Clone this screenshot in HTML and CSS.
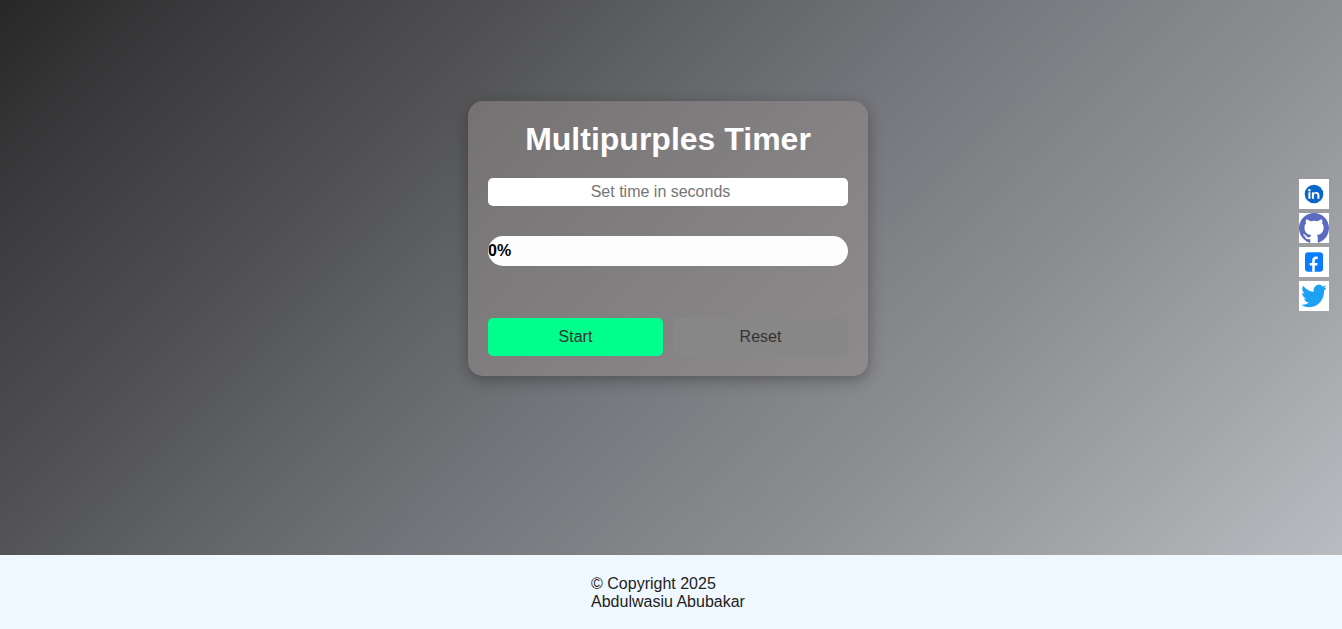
FILE: index.html
```html
<!DOCTYPE html>
<html lang="en">
<head>
<meta charset="utf-8">
<meta name="viewport" content="width=device-width, initial-scale=1">
<title>Multipurples Timer</title>
<link rel="stylesheet" href="styles.css">
</head>
<body>
<main class="page">
  <form class="card">
    <h1 class="title">Multipurples Timer</h1>
    <input class="time-input" type="number" min="0" placeholder="Set time in seconds" aria-label="Set time in seconds">
    <div class="progress"><span class="progress-text">0%</span></div>
    <div class="actions">
      <button class="btn btn-start" type="button">Start</button>
      <button class="btn btn-reset" type="button">Reset</button>
    </div>
  </form>
  <nav class="social" aria-label="Social links">
    <a class="social-link" href="#" aria-label="LinkedIn">
      <svg viewBox="0 0 30 30"><circle cx="15" cy="15" r="9.300" fill="#0a66c8"/><g fill="#fff"><circle cx="10.400" cy="11.200" r="1.200"/><path d="M9.400 13.200h2v6.500h-2zM12.900 13.200h1.900v.9c.5-.7 1.300-1.200 2.500-1.200 2.200 0 3.100 1.300 3.100 3.300v3.500h-2v-3.200c0-1.200-.4-1.900-1.600-1.900s-1.900.8-1.900 2v3.100h-2z"/></g></svg>
    </a>
    <a class="social-link" href="#" aria-label="GitHub">
      <svg viewBox="0 0 16 16"><path fill="#5c6bc0" d="M8 0C3.580 0 0 3.580 0 8c0 3.540 2.290 6.530 5.470 7.900.4.070.55-.17.55-.38 0-.19-.01-.92-.01-1.590-2.010.37-2.530-.49-2.690-.94-.09-.23-.48-.94-.82-1.130-.28-.15-.68-.52-.01-.53.63-.01 1.080.58 1.230.82.72 1.210 1.870.87 2.330.66.070-.52.28-.87.51-1.070-1.780-.2-3.640-.89-3.640-3.950 0-.87.31-1.590.82-2.150-.08-.2-.36-1.020.08-2.120 0 0 .67-.21 2.200.82.64-.18 1.320-.27 2-.27s1.360.09 2 .27c1.530-1.040 2.200-.82 2.200-.82.44 1.100.16 1.920.08 2.120.51.56.82 1.270.82 2.150 0 3.070-1.870 3.750-3.650 3.950.29.25.54.73.54 1.480 0 1.070-.01 1.930-.01 2.300 0 .21.15.36.55.28A8.010 8.010 0 0 0 16 8c0-4.420-3.580-8-8-8z"/></svg>
    </a>
    <a class="social-link" href="#" aria-label="Facebook">
      <svg viewBox="0 0 30 30"><rect x="6" y="5.300" width="18" height="19.400" rx="3.300" fill="#0a7cff"/><path fill="#fff" d="M13.200 24.700v-6.200h-2.500v-2.600h2.500v-2.200c0-2.900 1.500-4.300 3.800-4.300.7 0 1.300.1 1.700.2v2.300h-1.200c-1.300 0-1.700.7-1.700 1.800v2.200h2.800l-.5 2.600h-2.300v6.200z"/></svg>
    </a>
    <a class="social-link" href="#" aria-label="Twitter">
      <svg viewBox="0 0 30 30"><path transform="translate(2.300 1.100) scale(1.060 1.160)" fill="#1da1f2" d="M23.950 4.570a10 10 0 0 1-2.820.78 4.960 4.960 0 0 0 2.160-2.730 9.900 9.900 0 0 1-3.130 1.190 4.920 4.920 0 0 0-8.380 4.490C7.690 8.090 4.070 6.130 1.640 3.160a4.820 4.820 0 0 0-.67 2.480c0 1.710.87 3.210 2.190 4.100a4.900 4.900 0 0 1-2.230-.62v.06a4.920 4.920 0 0 0 3.950 4.830 5 5 0 0 1-2.210.08 4.940 4.940 0 0 0 4.600 3.420A9.870 9.870 0 0 1 0 19.540a13.990 13.990 0 0 0 7.560 2.210c9.050 0 14-7.500 14-13.980 0-.21 0-.42-.02-.63a9.940 9.940 0 0 0 2.460-2.550z"/></svg>
    </a>
  </nav>
</main>
<footer class="footer">
  <p class="copyright">© Copyright 2025<br>Abdulwasiu Abubakar</p>
</footer>
</body>
</html>
```
FILE: styles.css
```css
* {
  box-sizing: border-box;
  margin: 0;
  padding: 0;
}

body {
  display: flex;
  flex-direction: column;
  min-height: 100vh;
  font: 16px/18px "Liberation Sans", Arial, sans-serif;
}

.page {
  flex: 1;
  display: grid;
  grid-template-columns: 1fr minmax(0, 400px) 1fr;
  align-items: start;
  padding: 101px 6px 20px 0;
  background: linear-gradient(135deg, #272727, #39393b 10%, #525254 28%, #5f6162 37%, #717378 49%, #8e8f93 71%, #a6a7aa 87%, #b8bcc1);
}

.card {
  grid-column: 2;
  display: flex;
  flex-direction: column;
  padding: 20px;
  border-radius: 15px;
  background: rgba(149, 142, 142, 0.5);
  box-shadow: 0 4px 15px rgba(0, 0, 0, 0.3);
}

.title {
  margin-bottom: 20px;
  font-size: 32px;
  line-height: 37px;
  color: #fff;
  text-align: center;
}

.time-input {
  width: 100%;
  height: 28px;
  margin-bottom: 30px;
  border: 0;
  border-radius: 5px;
  background: #fff;
  font: inherit;
  text-align: center;
}

.time-input::placeholder {
  color: #757575;
}

.progress {
  display: flex;
  align-items: center;
  height: 30px;
  margin-bottom: 52px;
  border-radius: 15px;
  background: #fdfdfd;
}

.progress-text {
  font-weight: bold;
  color: #000;
}

.actions {
  display: grid;
  grid-template-columns: 1fr 1fr;
  gap: 10px;
}

.btn {
  padding: 10px;
  border: 0;
  border-radius: 5px;
  font: inherit;
  color: #333;
  cursor: pointer;
}

.btn-start {
  background: #00ff8c;
}

.btn-reset {
  background: #878787;
}

.social {
  display: grid;
  gap: 4px;
  justify-content: end;
  padding: 78px 7px 0 0;
}

.social-link {
  width: 30px;
  height: 30px;
  background: #fff;
}

.social-link svg {
  display: block;
  width: 30px;
  height: 30px;
}

.footer {
  display: flex;
  justify-content: center;
  padding: 20px 6px 18px 0;
  background: #f0f8ff;
  color: #222;
}
```
